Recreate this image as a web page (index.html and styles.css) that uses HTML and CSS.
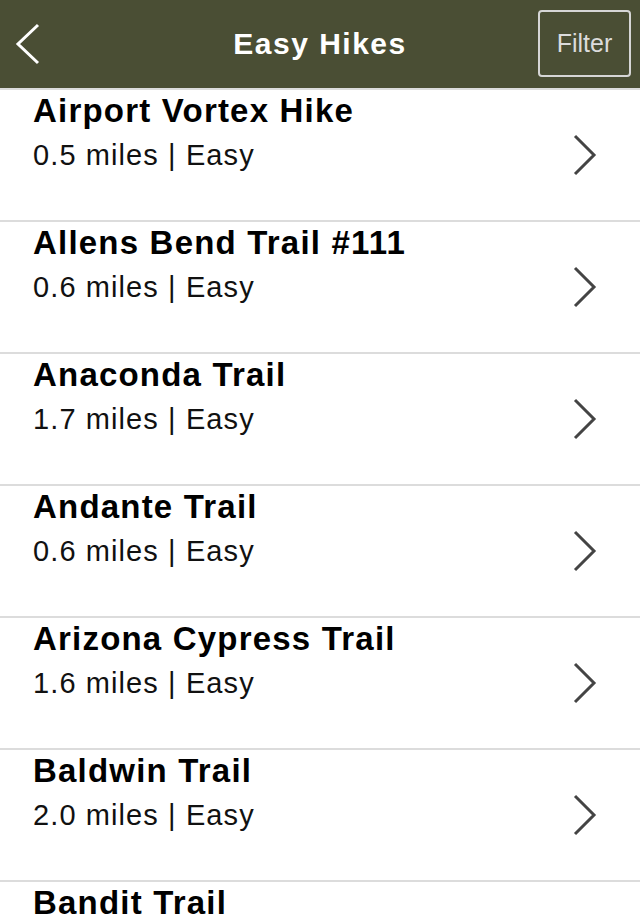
FILE: index.html
```html
<!DOCTYPE html>
<html>
<head>
  <title>Easy Hikes</title>
  <link rel="stylesheet" href="styles.css">
</head>
<body>
<div class="header">
  <a class="back" href="#">
    <svg width="26" height="44" viewBox="0 0 26 44"><polyline points="23,3 3,22 23,41" fill="none" stroke="#fff" stroke-width="3"/></svg>
  </a>
  <h1>Easy Hikes</h1>
  <button class="filter">Filter</button>
</div>

<ul class="hikes">
  <li class="hike">
    <div class="info">
      <div class="name">Airport Vortex Hike</div>
      <div class="meta">0.5 miles | Easy</div>
    </div>
    <svg class="arrow" width="26" height="42" viewBox="0 0 26 42"><polyline points="3,2 22,21 3,40" fill="none" stroke="#444" stroke-width="3"/></svg>
  </li>
  <li class="hike">
    <div class="info">
      <div class="name">Allens Bend Trail #111</div>
      <div class="meta">0.6 miles | Easy</div>
    </div>
    <svg class="arrow" width="26" height="42" viewBox="0 0 26 42"><polyline points="3,2 22,21 3,40" fill="none" stroke="#444" stroke-width="3"/></svg>
  </li>
  <li class="hike">
    <div class="info">
      <div class="name">Anaconda Trail</div>
      <div class="meta">1.7 miles | Easy</div>
    </div>
    <svg class="arrow" width="26" height="42" viewBox="0 0 26 42"><polyline points="3,2 22,21 3,40" fill="none" stroke="#444" stroke-width="3"/></svg>
  </li>
  <li class="hike">
    <div class="info">
      <div class="name">Andante Trail</div>
      <div class="meta">0.6 miles | Easy</div>
    </div>
    <svg class="arrow" width="26" height="42" viewBox="0 0 26 42"><polyline points="3,2 22,21 3,40" fill="none" stroke="#444" stroke-width="3"/></svg>
  </li>
  <li class="hike">
    <div class="info">
      <div class="name">Arizona Cypress Trail</div>
      <div class="meta">1.6 miles | Easy</div>
    </div>
    <svg class="arrow" width="26" height="42" viewBox="0 0 26 42"><polyline points="3,2 22,21 3,40" fill="none" stroke="#444" stroke-width="3"/></svg>
  </li>
  <li class="hike">
    <div class="info">
      <div class="name">Baldwin Trail</div>
      <div class="meta">2.0 miles | Easy</div>
    </div>
    <svg class="arrow" width="26" height="42" viewBox="0 0 26 42"><polyline points="3,2 22,21 3,40" fill="none" stroke="#444" stroke-width="3"/></svg>
  </li>
  <li class="hike last">
    <div class="info">
      <div class="name">Bandit Trail</div>
    </div>
  </li>
</ul>
</body>
</html>
```

FILE: styles.css
```css
body {
  font-family: "Liberation Sans", Arial, sans-serif;
  margin: 0;
  padding: 0;
  height: 920px;
  overflow: hidden;
  background: #fff;
}

.header {
  display: flex;
  align-items: center;
  justify-content: space-between;
  height: 88px;
  padding: 0 9px 0 15px;
  background: #4a4e34;
  border-bottom: 2px solid #dcdcdc;
}
.back {
  display: flex;
  width: 87px;
}
.header h1 {
  margin: 0;
  color: #fff;
  font-size: 30px;
  font-weight: bold;
  letter-spacing: 1.5px;
}
.filter {
  width: 93px;
  height: 67px;
  background: none;
  border: 2px solid #d6d6d6;
  border-radius: 4px;
  color: #dcdcdc;
  font-family: inherit;
  font-size: 25px;
  padding: 0;
  margin-top: -2px;
}

.hikes {
  list-style: none;
  margin: 0;
  padding: 0;
}
.hike {
  display: flex;
  align-items: center;
  justify-content: space-between;
  height: 130px;
  padding: 0 42px 0 33px;
  border-bottom: 2px solid #dcdcdc;
}
.hike.last {
  height: 40px;
  border-bottom: none;
}
.info {
  align-self: flex-start;
  padding-top: 3px;
}
.name {
  font-size: 33px;
  font-weight: bold;
  line-height: 36px;
  color: #000;
  letter-spacing: 1.2px;
}
.meta {
  margin-top: 8px;
  font-size: 29px;
  line-height: 36px;
  color: #111;
  letter-spacing: 1.1px;
}
```
